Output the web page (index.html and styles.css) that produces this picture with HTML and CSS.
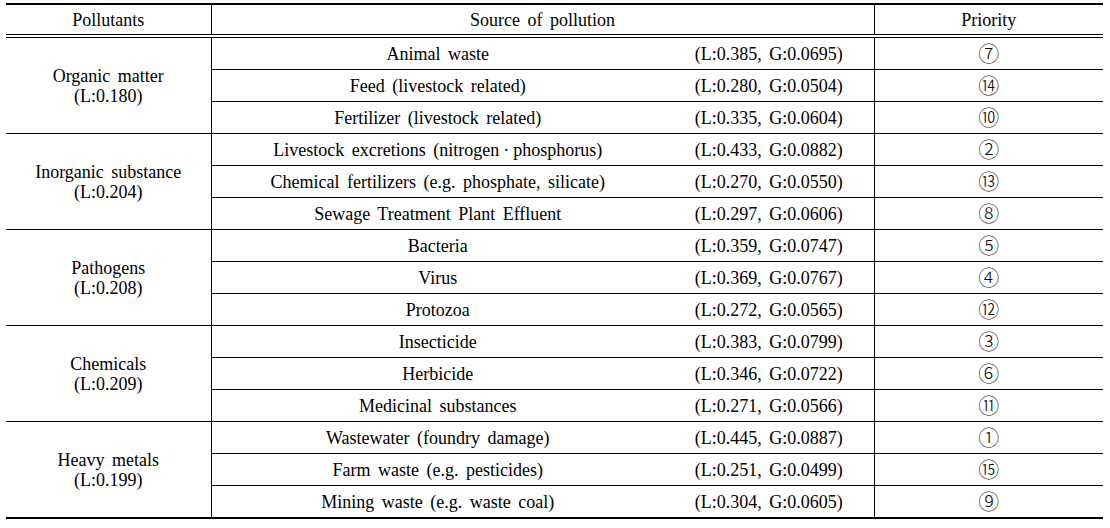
FILE: index.html
```html
<!DOCTYPE html>
<html>
<head>
<meta charset="utf-8">
<link rel="stylesheet" href="styles.css">
</head>
<body>
<table class="tbl">
  <colgroup>
    <col class="c-pol">
    <col class="c-name">
    <col class="c-val">
    <col class="c-pri">
  </colgroup>
  <thead>
    <tr>
      <th class="pol">Pollutants</th>
      <th colspan="2">Source of pollution</th>
      <th class="pri">Priority</th>
    </tr>
  </thead>
  <tbody>
    <tr><td class="pol" rowspan="3">Organic matter<br>(L:0.180)</td><td>Animal waste</td><td>(L:0.385, G:0.0695)</td><td class="pri"><span class="num">⑦</span></td></tr>
    <tr><td>Feed (livestock related)</td><td>(L:0.280, G:0.0504)</td><td class="pri"><span class="num">⑭</span></td></tr>
    <tr><td>Fertilizer (livestock related)</td><td>(L:0.335, G:0.0604)</td><td class="pri"><span class="num">⑩</span></td></tr>
  </tbody>
  <tbody>
    <tr><td class="pol" rowspan="3">Inorganic substance<br>(L:0.204)</td><td>Livestock excretions (nitrogen<span class="dot">·</span>phosphorus)</td><td>(L:0.433, G:0.0882)</td><td class="pri"><span class="num">②</span></td></tr>
    <tr><td>Chemical fertilizers (e.g. phosphate, silicate)</td><td>(L:0.270, G:0.0550)</td><td class="pri"><span class="num">⑬</span></td></tr>
    <tr><td>Sewage Treatment Plant Effluent</td><td>(L:0.297, G:0.0606)</td><td class="pri"><span class="num">⑧</span></td></tr>
  </tbody>
  <tbody>
    <tr><td class="pol" rowspan="3">Pathogens<br>(L:0.208)</td><td>Bacteria</td><td>(L:0.359, G:0.0747)</td><td class="pri"><span class="num">⑤</span></td></tr>
    <tr><td>Virus</td><td>(L:0.369, G:0.0767)</td><td class="pri"><span class="num">④</span></td></tr>
    <tr><td>Protozoa</td><td>(L:0.272, G:0.0565)</td><td class="pri"><span class="num">⑫</span></td></tr>
  </tbody>
  <tbody>
    <tr><td class="pol" rowspan="3">Chemicals<br>(L:0.209)</td><td>Insecticide</td><td>(L:0.383, G:0.0799)</td><td class="pri"><span class="num">③</span></td></tr>
    <tr><td>Herbicide</td><td>(L:0.346, G:0.0722)</td><td class="pri"><span class="num">⑥</span></td></tr>
    <tr><td>Medicinal substances</td><td>(L:0.271, G:0.0566)</td><td class="pri"><span class="num">⑪</span></td></tr>
  </tbody>
  <tbody class="last">
    <tr><td class="pol" rowspan="3">Heavy metals<br>(L:0.199)</td><td>Wastewater (foundry damage)</td><td>(L:0.445, G:0.0887)</td><td class="pri"><span class="num">①</span></td></tr>
    <tr><td>Farm waste (e.g. pesticides)</td><td>(L:0.251, G:0.0499)</td><td class="pri"><span class="num">⑮</span></td></tr>
    <tr><td>Mining waste (e.g. waste coal)</td><td>(L:0.304, G:0.0605)</td><td class="pri"><span class="num">⑨</span></td></tr>
  </tbody>
</table>
</body>
</html>
```

FILE: styles.css
```css
html, body {
  margin: 0;
  padding: 0;
  background: #fff;
}

body {
  padding: 3px 0 0 6px;
  font-family: "Liberation Serif", "DejaVu Serif", serif;
  font-size: 18px;
  color: #000;
  word-spacing: 3px;
}

.tbl {
  border-collapse: collapse;
  table-layout: fixed;
  width: 1097px;
}

.c-pol { width: 205px; }
.c-name { width: 453px; }
.c-val { width: 210px; }
.c-pri { width: 229px; }

.tbl th,
.tbl td {
  padding: 0;
  text-align: center;
  vertical-align: middle;
  font-weight: normal;
  line-height: 20px;
  font-family: "Liberation Serif", "DejaVu Serif", serif;
}

.tbl th {
  height: 29px;
  border-top: 2px solid #000;
  border-bottom: 4px double #000;
}

.tbl td {
  height: 31px;
  border-top: 1px solid #000;
}

.tbl .pol {
  border-right: 1px solid #000;
}

.tbl .pri {
  border-left: 1px solid #000;
}

.last tr:last-child td,
.last td.pol {
  border-bottom: 2px solid #000;
}

.num {
  font-family: "Noto Sans CJK KR", "DejaVu Sans", sans-serif;
  font-size: 21px;
  font-weight: 300;
  color: #111;
}

.dot {
  margin: 0 4px;
}
```
